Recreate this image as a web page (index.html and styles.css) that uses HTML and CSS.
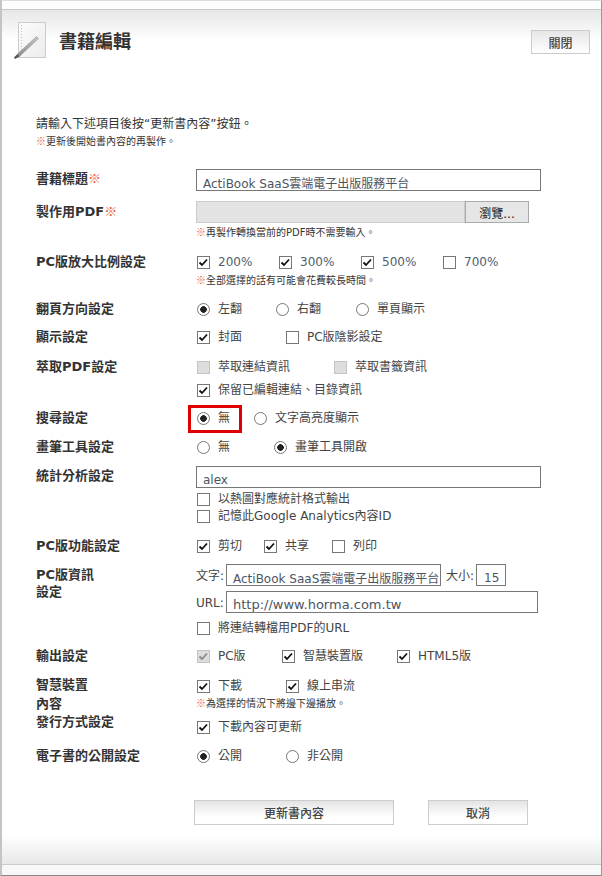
FILE: index.html
```html
<!DOCTYPE html>
<html lang="zh-Hant">
<head>
<meta charset="utf-8">
<title>書籍編輯</title>
<link rel="stylesheet" href="styles.css">
</head>
<body>
<div class="page">
  <div class="strip"></div>
  <div class="panel">
    <header class="head">
      <svg class="logo" width="34" height="38" viewBox="0 0 34 38">
        <defs><linearGradient id="pg" x1="0" y1="0" x2="1" y2="1"><stop offset="0" stop-color="#fcfcfc"/><stop offset="1" stop-color="#ececec"/></linearGradient>
        <linearGradient id="pn" x1="1" y1="0" x2="0" y2="1"><stop offset="0" stop-color="#c8c8c8"/><stop offset="1" stop-color="#8a8a8a"/></linearGradient></defs>
        <rect x="5.5" y="0.5" width="27" height="35" fill="url(#pg)" stroke="#ccc"/>
        <path d="M8.500 3V30" stroke="#bbb" stroke-dasharray="1 2"/>
        <path d="M4.500 32L23.500 14.500L25.500 16.500L6.500 34.500Z" fill="url(#pn)" stroke="#999" stroke-width=".6"/>
        <path d="M4.500 32L1 35.500L2 37L6.500 34.500Z" fill="#555"/>
      </svg>
      <h1 class="title">書籍編輯</h1>
      <button class="close" type="button">關閉</button>
    </header>

    <p class="intro">請輸入下述項目後按“更新書內容”按鈕。</p>
    <p class="note intro-note"><span class="mark">※</span>更新後開始書內容的再製作。</p>

    <form class="form">
      <div class="row">
        <div class="lab">書籍標題<span class="mark">※</span></div>
        <div><input class="text wide" type="text" value="ActiBook SaaS雲端電子出版服務平台"></div>
      </div>
      <div class="row m10">
        <div class="lab down1">製作用PDF<span class="mark">※</span></div>
        <div>
          <div class="file"><input class="file-box" type="text" readonly><button class="browse" type="button">瀏覽...</button></div>
          <p class="note m3"><span class="mark">※</span>再製作轉換當前的PDF時不需要輸入。</p>
        </div>
      </div>
      <div class="row m12">
        <div class="lab">PC版放大比例設定</div>
        <div>
          <div class="opts">
            <label class="opt w82 lat"><input type="checkbox" checked>200%</label>
            <label class="opt w82 lat"><input type="checkbox" checked>300%</label>
            <label class="opt w82 lat"><input type="checkbox" checked>500%</label>
            <label class="opt lat"><input type="checkbox">700%</label>
          </div>
          <p class="note m2"><span class="mark">※</span>全部選擇的話有可能會花費較長時間。</p>
        </div>
      </div>
      <div class="row m11">
        <div class="lab">翻頁方向設定</div>
        <div class="opts">
          <label class="opt w79"><input type="radio" name="dir" checked>左翻</label>
          <label class="opt w80"><input type="radio" name="dir">右翻</label>
          <label class="opt"><input type="radio" name="dir">單頁顯示</label>
        </div>
      </div>
      <div class="row m8">
        <div class="lab">顯示設定</div>
        <div class="opts">
          <label class="opt w89"><input type="checkbox" checked>封面</label>
          <label class="opt"><input type="checkbox">PC版陰影設定</label>
        </div>
      </div>
      <div class="row m10">
        <div class="lab">萃取PDF設定</div>
        <div>
          <div class="opts">
            <label class="opt w137"><input type="checkbox" disabled>萃取連結資訊</label>
            <label class="opt"><input type="checkbox" disabled>萃取書籤資訊</label>
          </div>
          <div class="opts m3">
            <label class="opt"><input type="checkbox" checked>保留已編輯連結、目錄資訊</label>
          </div>
        </div>
      </div>
      <div class="row m8">
        <div class="lab">搜尋設定</div>
        <div class="opts">
          <label class="opt w57 hl"><input type="radio" name="find" checked>無</label>
          <label class="opt"><input type="radio" name="find">文字高亮度顯示</label>
        </div>
      </div>
      <div class="row m9">
        <div class="lab">畫筆工具設定</div>
        <div class="opts">
          <label class="opt w77"><input type="radio" name="pen">無</label>
          <label class="opt"><input type="radio" name="pen" checked>畫筆工具開啟</label>
        </div>
      </div>
      <div class="row m9">
        <div class="lab">統計分析設定</div>
        <div>
          <input class="text wide" type="text" value="alex">
          <div class="opts tight m3"><label class="opt"><input type="checkbox">以熱圖對應統計格式輸出</label></div>
          <div class="opts tight m1"><label class="opt"><input type="checkbox">記憶此Google Analytics內容ID</label></div>
        </div>
      </div>
      <div class="row m12">
        <div class="lab">PC版功能設定</div>
        <div class="opts">
          <label class="opt w67"><input type="checkbox" checked>剪切</label>
          <label class="opt w68"><input type="checkbox" checked>共享</label>
          <label class="opt"><input type="checkbox">列印</label>
        </div>
      </div>
      <div class="row m8">
        <div class="lab two">PC版資訊<br>設定</div>
        <div>
          <div class="fields">
            <span class="field-name">文字:</span>
            <input class="text info" type="text" value="ActiBook SaaS雲端電子出版服務平台">
            <span class="field-name size-name">大小:</span>
            <input class="text size" type="text" value="15">
          </div>
          <div class="fields m5">
            <span class="field-name">URL:</span>
            <input class="text url" type="text" value="http://www.horma.com.tw">
          </div>
          <div class="opts m5"><label class="opt"><input type="checkbox">將連結轉檔用PDF的URL</label></div>
        </div>
      </div>
      <div class="row m8">
        <div class="lab">輸出設定</div>
        <div class="opts">
          <label class="opt w85"><input type="checkbox" checked disabled>PC版</label>
          <label class="opt w115"><input type="checkbox" checked>智慧裝置版</label>
          <label class="opt"><input type="checkbox" checked>HTML5版</label>
        </div>
      </div>
      <div class="row m10">
        <div class="lab device">智慧裝置<br>內容</div>
        <div>
          <div class="opts">
            <label class="opt w89"><input type="checkbox" checked>下載</label>
            <label class="opt"><input type="checkbox" checked>線上串流</label>
          </div>
          <p class="note m1"><span class="mark">※</span>為選擇的情況下將邊下邊播放。</p>
        </div>
      </div>
      <div class="row m6">
        <div class="lab up5">發行方式設定</div>
        <div class="opts"><label class="opt"><input type="checkbox" checked>下載內容可更新</label></div>
      </div>
      <div class="row m9">
        <div class="lab">電子書的公開設定</div>
        <div class="opts">
          <label class="opt w89"><input type="radio" name="pub" checked>公開</label>
          <label class="opt"><input type="radio" name="pub">非公開</label>
        </div>
      </div>
      <div class="actions">
        <button class="btn update" type="button">更新書內容</button>
        <button class="btn cancel" type="button">取消</button>
      </div>
    </form>
  </div>
  <footer class="foot"></footer>
</div>
</body>
</html>
```
FILE: styles.css
```css
* { box-sizing: border-box; }
html, body { margin: 0; padding: 0; background: #fff; }
body {
  font-family: "DejaVu Sans", "Noto Sans CJK TC", sans-serif;
  font-size: 12px;
  color: #444;
}
p { margin: 0; }
.page {
  width: 602px;
  height: 876px;
  display: flex;
  flex-direction: column;
  border-left: 2px solid #c4c4c4;
  border-right: 1px solid #999;
  border-top: 1px solid #ddd;
  border-bottom: 1px solid #888;
  overflow: hidden;
}
.strip { height: 8px; flex: none; background: #fdfdfd; }
.panel {
  flex: 1;
  border-top: 1px solid #c8c8c8;
  background: linear-gradient(#e8e8e8 2px, #fff 31px) no-repeat;
  background-size: 100% 34px;
  padding-top: 1px;
}
.head {
  display: flex;
  height: 74px;
  padding: 10px 11px 0 11px;
}
.logo { display: block; flex: none; margin-top: 1px; }
.title {
  margin: 9px 0 0 12px;
  font-size: 18px;
  line-height: 24px;
  font-weight: 700;
  color: #333;
}
.close {
  margin-left: auto;
  margin-top: 9px;
  width: 59px;
  height: 24px;
  border: 1px solid #ccc;
  background: linear-gradient(#e6e6e6, #fff);
  font: 500 12px "Noto Sans CJK TC", sans-serif;
  color: #444;
  padding: 0;
}
.intro {
  margin: 30px 0 0 34px;
  height: 18px;
  font-size: 12px;
  line-height: 18px;
  color: #333;
}
.note {
  height: 14px;
  font-size: 10px;
  line-height: 14px;
  color: #333;
}
.intro-note { margin: 2px 0 0 34px; }
.mark { color: #e8623a; line-height: 0; font-family: "Noto Sans CJK TC", sans-serif; }
.form { margin: 20px 0 0 34px; }
.row {
  display: grid;
  grid-template-columns: 160px 1fr;
}
.lab {
  font-size: 13px;
  line-height: 20px;
  font-weight: 700;
  color: #333;
}
.down1 { margin-top: 1px; }
.up5 { margin-top: -5px; }
.two { padding-top: 2px; line-height: 17px; }
.device { height: 35px; margin-top: -1px; line-height: 19px; }
.m1 { margin-top: 1px; }
.m2 { margin-top: 2px; }
.m3 { margin-top: 3px; }
.m5 { margin-top: 5px; }
.m6 { margin-top: 6px; }
.m8 { margin-top: 8px; }
.m9 { margin-top: 9px; }
.m10 { margin-top: 10px; }
.m11 { margin-top: 11px; }
.m12 { margin-top: 12px; }

.text {
  display: block;
  height: 22px;
  border: 1px solid #777;
  padding: 5px 0 0 6px;
  margin: 0;
  background: #fff;
  font: 12px "DejaVu Sans", "Noto Sans CJK TC", sans-serif;
  color: #4c5562;
  border-radius: 0;
  outline: none;
}
.wide { width: 345px; }
.file { display: flex; height: 22px; }
.file-box {
  width: 269px;
  height: 22px;
  margin: 0;
  border: 1px solid #ccc;
  background: #e3e3e3;
  padding: 0;
}
.browse {
  width: 64px;
  height: 22px;
  padding: 0;
  border: 1px solid #aaa;
  background: #e6e6e6;
  font: 12px "DejaVu Sans", "Noto Sans CJK TC", sans-serif;
  color: #222;
}
.opts {
  display: flex;
  height: 20px;
  padding-left: 1px;
}
.opts.tight { height: 16px; }
.opt {
  display: flex;
  flex: none;
  align-items: center;
  gap: 8px;
  line-height: 20px;
  white-space: nowrap;
  color: #444;
}
.lat { color: #4f5d70; }
.opt input {
  appearance: none;
  flex: none;
  width: 13px;
  height: 13px;
  margin: 0;
  background: #fff no-repeat center;
  outline: none;
}
.opt input[type=checkbox] { border: 1px solid #777; }
.opt input[type=checkbox]:checked {
  background-image: url("data:image/svg+xml,%3Csvg xmlns='http://www.w3.org/2000/svg' width='11' height='11'%3E%3Cpath d='M1.500 5.500L4 8L9 2.500' fill='none' stroke='%23111' stroke-width='1.800'/%3E%3C/svg%3E");
}
.opt input[type=checkbox]:disabled { background-color: #ddd; border-color: #c4c4c4; }
.opt input[type=checkbox]:disabled:checked {
  background-image: url("data:image/svg+xml,%3Csvg xmlns='http://www.w3.org/2000/svg' width='11' height='11'%3E%3Cpath d='M1.500 5.500L4 8L9 2.500' fill='none' stroke='%23888' stroke-width='1.800'/%3E%3C/svg%3E");
}
.opt input[type=radio] { border: 1px solid #777; border-radius: 50%; }
.opt input[type=radio]:checked {
  background-image: radial-gradient(circle, #222 0, #222 3px, transparent 3.600px);
}
.w57 { width: 57px; }
.w67 { width: 67px; }
.w68 { width: 68px; }
.w77 { width: 77px; }
.w79 { width: 79px; }
.w80 { width: 80px; }
.w82 { width: 82px; }
.w85 { width: 85px; }
.w89 { width: 89px; }
.w115 { width: 115px; }
.w137 { width: 137px; }
.hl { position: relative; }
.hl::before {
  content: "";
  box-sizing: border-box;
  position: absolute;
  left: -9px;
  top: -3px;
  width: 54px;
  height: 28px;
  border: 3px solid #e00000;
  pointer-events: none;
}
.fields { display: flex; align-items: flex-start; height: 22px; }
.field-name { width: 30px; flex: none; line-height: 24px; color: #444; }
.size-name { width: 30px; margin-left: 5px; }
.info { width: 215px; }
.size { width: 30px; padding-left: 7px; }
.url { width: 312px; font-size: 13px; }
.actions {
  display: flex;
  gap: 34px;
  margin: 34px 0 0 158px;
}
.btn {
  height: 25px;
  padding: 0;
  border: 1px solid #ccc;
  background: linear-gradient(#e4e4e4, #fff 70%);
  font: 500 12px "Noto Sans CJK TC", sans-serif;
  color: #444;
}
.update { width: 200px; }
.cancel { width: 100px; }
.foot {
  flex: none;
  height: 40px;
  background: linear-gradient(#fff, #e8e8e8 28px, #e8e8e8 29px, #ccc 29px, #ccc 30px, #f8f8f8 30px);
}
```
